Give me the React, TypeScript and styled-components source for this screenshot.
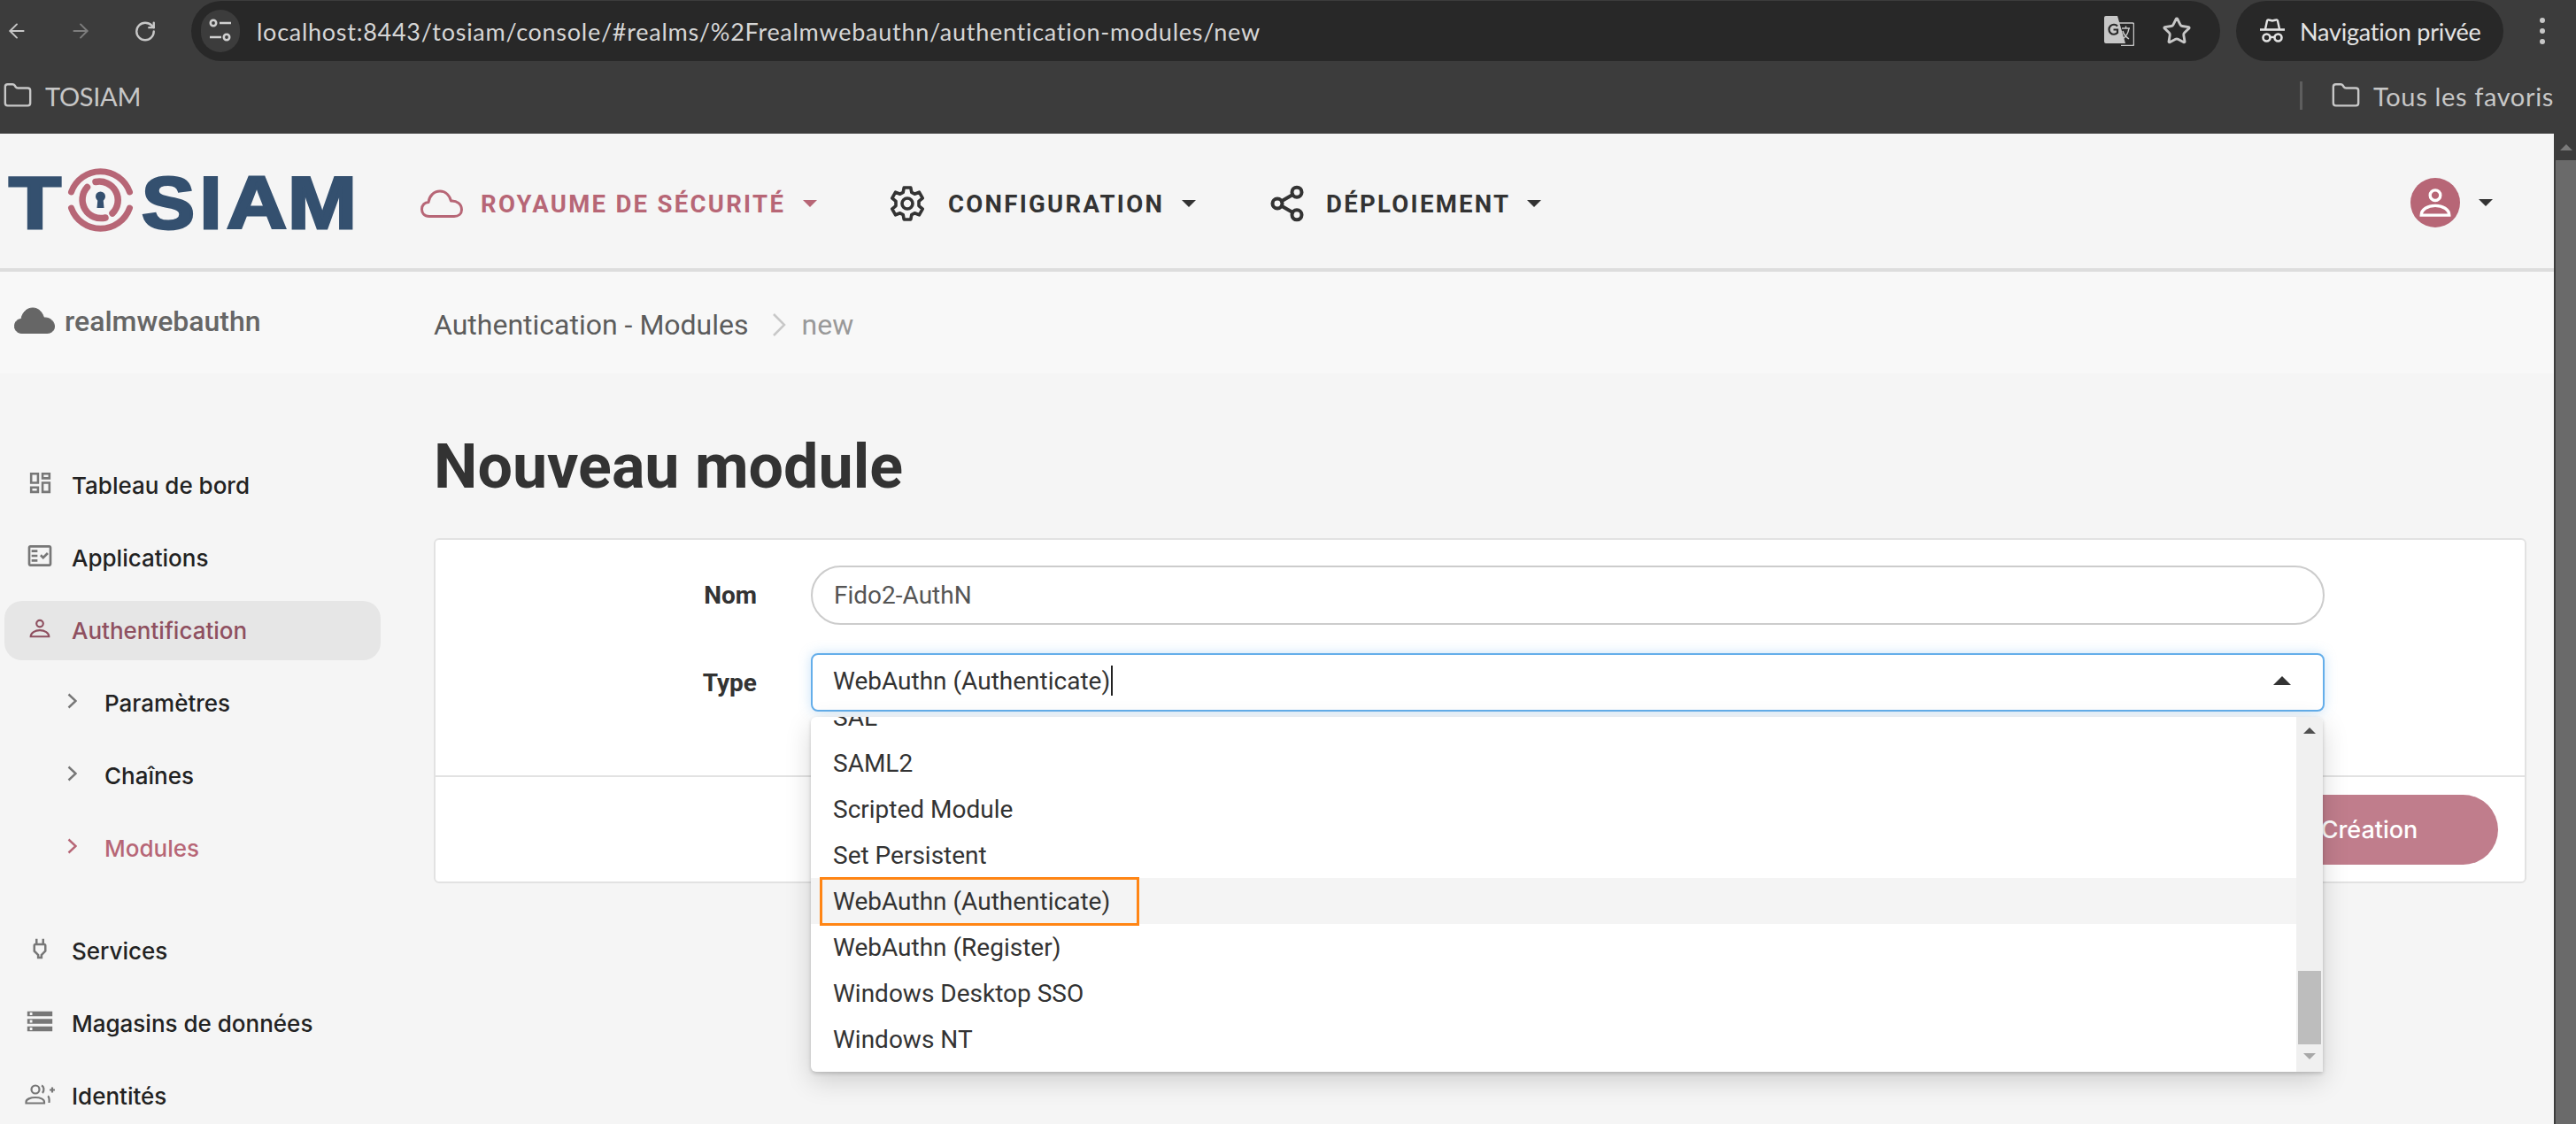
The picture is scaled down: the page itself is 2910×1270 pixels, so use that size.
import React from "react";
import styled, { createGlobalStyle } from "styled-components";
import { ArrowLeft, ArrowRight, RotateCw, Star, Folder, Share2 } from "lucide-react";
import { MdOutlineDashboard, MdOutlineFactCheck, MdOutlinePower, MdStorage } from "react-icons/md";

const rose = "#b76676";
const logoBlue = "#34506f";

const GlobalStyle = createGlobalStyle`
  html, body { margin: 0; padding: 0; background: #f5f5f5; overflow: hidden; }
  * { box-sizing: border-box; }
`;

const Screen = styled.div`
  width: 2910px;
  height: 1270px;
  overflow: hidden;
  display: flex;
  flex-direction: column;
  font-family: Roboto, "Liberation Sans", sans-serif;
`;

/* browser chrome */
const Chrome = styled.div`
  height: 151px;
  flex: none;
  background: #3c3c3c;
  color: #c7c7c7;
  font-family: Lato, "Noto Sans", sans-serif;
  font-size: 27px;
`;

const AddressRow = styled.div`
  height: 70px;
  display: flex;
  align-items: center;
  padding-left: 6px;
  color: #c7c7c7;
`;

const ToolSlot = styled.div<{ $gap: number; $dim?: boolean }>`
  width: 26px;
  height: 30px;
  margin-right: ${(p) => p.$gap}px;
  color: ${(p) => (p.$dim ? "#7d7d7d" : "#c7c7c7")};
  display: flex;
  align-items: center;
  justify-content: center;
`;

const Omnibox = styled.div`
  width: 2292px;
  height: 68px;
  border-radius: 34px;
  background: #282828;
  display: flex;
  align-items: center;
  padding: 0 32px 0 11px;
`;

const SiteChip = styled.div`
  width: 44px;
  height: 48px;
  border-radius: 24px;
  background: #3c3c3c;
  display: flex;
  align-items: center;
  justify-content: center;
  margin-right: 19px;
`;

const UrlText = styled.span`
  flex: 1;
  color: #d6d6d6;
  font-weight: 400;
  letter-spacing: 0.73px;
  white-space: nowrap;
`;

const OmniIcons = styled.div`
  display: flex;
  align-items: center;
  gap: 31px;
`;

const PrivatePill = styled.div`
  width: 302px;
  height: 68px;
  margin-left: 18px;
  border-radius: 34px;
  background: #282828;
  display: flex;
  align-items: center;
  gap: 16px;
  padding-left: 26px;
  color: #e3e3e3;
  letter-spacing: -0.2px;
  white-space: nowrap;
`;

const MenuDots = styled.div`
  width: 6px;
  margin-left: 41px;
  display: flex;
  flex-direction: column;
  gap: 6px;
  span {
    width: 6px;
    height: 6px;
    border-radius: 50%;
    background: #c7c7c7;
  }
`;

const BookmarkRow = styled.div`
  height: 81px;
  display: flex;
  align-items: center;
  padding: 0 25px 5px 3px;
  font-size: 29px;
  white-space: nowrap;
`;

const Bookmark = styled.div<{ $tracking: number }>`
  display: flex;
  align-items: center;
  gap: 14px;
  letter-spacing: ${(p) => p.$tracking}px;
`;

const BookmarkSeparator = styled.div`
  width: 3px;
  height: 32px;
  background: #5e5e5e;
  margin-left: auto;
  margin-right: 32px;
`;

/* page */
const Viewport = styled.div`
  flex: 1;
  min-height: 0;
  display: flex;
`;

const Page = styled.div`
  width: 2885px;
  flex: none;
  background: #f5f5f5;
  display: flex;
  flex-direction: column;
`;

const PageScroll = styled.div`
  flex: 1;
  background: #3c3c3c;
  padding-left: 2px;
  display: flex;
  flex-direction: column;
  align-items: center;
`;

const PageScrollArrow = styled.div`
  height: 30px;
  display: flex;
  align-items: center;
  justify-content: center;
  &::before {
    content: "";
    border-left: 7px solid transparent;
    border-right: 7px solid transparent;
    border-bottom: 7px solid #7a7a7a;
  }
`;

const PageScrollThumb = styled.div`
  width: 100%;
  flex: 1;
  background: #6a6a6a;
`;

const TopBar = styled.header`
  height: 156px;
  flex: none;
  display: flex;
  align-items: center;
  border-bottom: 4px solid #dddddd;
  padding-right: 69px;
`;

const Logo = styled.svg`
  width: 475px;
  height: 100px;
  flex: none;
`;

const NavItem = styled.div<{ $width: number; $active?: boolean }>`
  width: ${(p) => p.$width}px;
  flex: none;
  margin-top: 6px;
  display: flex;
  align-items: center;
  color: ${(p) => (p.$active ? rose : "#333333")};
`;

const NavLabel = styled.span<{ $iconGap: number }>`
  margin-left: ${(p) => p.$iconGap}px;
  font-size: 27.500px;
  font-weight: 700;
  letter-spacing: 2.300px;
  white-space: nowrap;
`;

const Caret = styled.span<{ $gap: number; $up?: boolean; $size?: number }>`
  width: 0;
  height: 0;
  flex: none;
  margin-left: ${(p) => p.$gap}px;
  border-left: ${(p) => p.$size ?? 8}px solid transparent;
  border-right: ${(p) => p.$size ?? 8}px solid transparent;
  ${(p) => (p.$up ? "border-bottom" : "border-top")}: ${(p) => p.$size ?? 8}px solid currentColor;
`;

const UserMenu = styled.div`
  margin-left: auto;
  margin-top: 3px;
  display: flex;
  align-items: center;
  color: #333333;
`;

const Avatar = styled.div`
  width: 56px;
  height: 56px;
  border-radius: 50%;
  background: ${rose};
  display: flex;
  align-items: center;
  justify-content: center;
`;

const CrumbBar = styled.div`
  height: 115px;
  flex: none;
  background: #f8f8f8;
  display: flex;
  align-items: center;
`;

const Realm = styled.div`
  width: 490px;
  flex: none;
  display: flex;
  align-items: center;
  gap: 10px;
  padding: 0 0 4px 15px;
  color: #666666;
  font-size: 32px;
  font-weight: 500;
`;

const Crumbs = styled.div`
  display: flex;
  align-items: center;
  padding-top: 4px;
  font-size: 32px;
  color: #5c5c5c;
`;

const CrumbChevron = styled.svg`
  width: 16px;
  height: 28px;
  margin: 0 18px 0 26px;
`;

const CrumbCurrent = styled.span`
  color: #999999;
`;

const Body = styled.div`
  flex: 1;
  min-height: 0;
  display: flex;
`;

const Sidebar = styled.nav`
  width: 490px;
  flex: none;
  padding: 93px 0 0 5px;
  font-family: Inter, Roboto, sans-serif;
  font-size: 26px;
  font-weight: 500;
`;

const SideRow = styled.div<{ $sub?: boolean; $active?: boolean; $current?: boolean; $before?: number }>`
  width: 425px;
  height: 67px;
  margin-bottom: 15px;
  margin-top: ${(p) => p.$before ?? 0}px;
  border-radius: 20px;
  display: flex;
  align-items: center;
  padding-left: ${(p) => (p.$sub ? 71 : 20)}px;
  gap: ${(p) => (p.$sub ? 31 : 16)}px;
  background: ${(p) => (p.$active ? "#e6e6e6" : "transparent")};
  color: ${(p) => (p.$active ? "#8f5060" : p.$current ? rose : "#222222")};
  white-space: nowrap;
`;

const SideIcon = styled.span<{ $tint?: string }>`
  width: 40px;
  height: 40px;
  flex: none;
  display: flex;
  align-items: center;
  justify-content: center;
  margin-top: -6px;
  color: ${(p) => p.$tint ?? "#777777"};
`;

const SubChevron = styled.svg`
  width: 11px;
  height: 18px;
  flex: none;
  margin-top: -6px;
`;

const Main = styled.main`
  flex: 1;
  min-width: 0;
  padding: 65px 31px 0 0;
`;

const Title = styled.h1`
  margin: 0 0 41px;
  height: 80px;
  line-height: 80px;
  font-size: 70px;
  font-weight: 700;
  color: #333333;
`;

const Card = styled.section`
  height: 390px;
  background: #ffffff;
  border: 2px solid #e2e2e2;
  border-radius: 6px;
  display: flex;
  flex-direction: column;
`;

const FormArea = styled.div`
  height: 268px;
  flex: none;
  padding-top: 29px;
  border-bottom: 2px solid #e2e2e2;
  display: flex;
  flex-direction: column;
  gap: 32px;
`;

const FormRow = styled.div`
  display: grid;
  grid-template-columns: 363px 1710px;
  column-gap: 61px;
  align-items: center;
`;

const FieldLabel = styled.label`
  text-align: right;
  font-size: 28px;
  font-weight: 700;
  color: #333333;
`;

const NameInput = styled.div`
  height: 67px;
  border: 2px solid #cccccc;
  border-radius: 34px;
  padding-left: 24px;
  display: flex;
  align-items: center;
  font-size: 28px;
  color: #555555;
`;

const SelectWrap = styled.div`
  position: relative;
`;

const SelectBox = styled.div`
  height: 66px;
  border: 2px solid #64aeea;
  border-radius: 8px;
  box-shadow: 0 0 14px rgba(100, 174, 234, 0.35);
  padding: 0 36px 4px 23px;
  display: flex;
  align-items: center;
  font-size: 28px;
  color: #333333;
`;

const TextCursor = styled.span`
  width: 2px;
  height: 34px;
  background: #222222;
  margin-left: 1px;
`;

const SelectSpacer = styled.span`
  flex: 1;
`;

const Dropdown = styled.div`
  position: absolute;
  top: 72px;
  left: 0;
  width: 1708px;
  height: 401px;
  z-index: 5;
  background: #ffffff;
  border-radius: 6px 6px 0 6px;
  box-shadow: 0 2px 4px rgba(0, 0, 0, 0.18), 0 10px 30px rgba(0, 0, 0, 0.16);
  overflow: hidden;
  display: flex;
`;

const OptionList = styled.div`
  flex: 1;
  margin-top: -26px;
`;

const Option = styled.div<{ $hover?: boolean }>`
  height: 52px;
  padding-left: 25px;
  display: flex;
  align-items: center;
  font-size: 28px;
  color: #333333;
  background: ${(p) => (p.$hover ? "#f4f4f4" : "transparent")};
`;

const OptionMark = styled.span`
  position: relative;
  &::after {
    content: "";
    position: absolute;
    left: -15px;
    right: -33px;
    top: -11px;
    bottom: -11px;
    border: 3px solid #ff8514;
  }
`;

const DropScroll = styled.div`
  width: 30px;
  flex: none;
  background: #f0f0f0;
  display: flex;
  flex-direction: column;
  align-items: center;
  padding-top: 12px;
`;

const DropArrow = styled.span<{ $down?: boolean }>`
  width: 0;
  height: 0;
  border-left: 7px solid transparent;
  border-right: 7px solid transparent;
  ${(p) => (p.$down ? "border-top: 7px solid #a8a8a8; margin-top: 10px;" : "border-bottom: 7px solid #505050;")}
`;

const DropThumb = styled.div`
  width: 26px;
  height: 83px;
  margin-top: 268px;
  background: #bdbdbd;
`;

const CardFooter = styled.div`
  flex: 1;
  display: flex;
  align-items: center;
  justify-content: flex-end;
  padding-right: 30px;
`;

const SubmitButton = styled.button`
  width: 291px;
  height: 79px;
  border: none;
  border-radius: 40px;
  background: #c07d8c;
  color: #ffffff;
  font-family: Inter, Roboto, sans-serif;
  font-size: 27px;
  font-weight: 500;
`;

const PeakCloud = ({ filled, w, h }: { filled?: boolean; w: number; h: number }) => (
  <svg width={w} height={h} viewBox="0 0 48 32" style={{ flex: "none" }}>
    <path
      d="M10 30 C4 30 1.500 26 1.500 22 C1.500 17 5 14 9 14 C10 7 15 1.500 22 1.500 C29 1.500 33 7 34.500 12.500 C41 12 46.500 16 46.500 22.500 C46.500 27 43 30 38 30 Z"
      fill={filled ? "currentColor" : "none"}
      stroke="currentColor"
      strokeWidth={filled ? 1 : 3}
      strokeLinejoin="round"
    />
  </svg>
);

const GearIcon = () => (
  <svg width="40" height="40" viewBox="2 2 20 20" fill="none" stroke="currentColor" strokeWidth="1.800" strokeLinejoin="round" style={{ flex: "none" }}>
    <path d="M10.100 3h3.800l.5 2.700 1.700.9 2.600-1 1.900 3.300-2.100 1.800v2.600l2.100 1.800-1.900 3.300-2.600-1-1.700.9-.5 2.700h-3.800l-.5-2.700-1.700-.9-2.600 1-1.900-3.300 2.100-1.800v-2.600L3.400 8.900l1.900-3.300 2.600 1 1.700-.9z" />
    <circle cx="12" cy="12" r="3" />
  </svg>
);

const FolderIcon = () => <Folder size={34} strokeWidth={1.7} />;

const TuneIcon = () => (
  <svg width="26" height="28" viewBox="0 0 26 28" fill="none" stroke="#d0d0d0" strokeWidth="2.600">
    <circle cx="5" cy="5" r="3.200" />
    <path d="M12 5h13M1 21h13" />
    <circle cx="20" cy="21" r="3.200" />
  </svg>
);

const TranslateIcon = () => (
  <svg width="34" height="34" viewBox="0 0 34 34">
    <path d="M15 8h17a1.500 1.500 0 0 1 1.500 1.500V32a1.500 1.500 0 0 1-1.500 1.500H19" fill="none" stroke="#c7c7c7" strokeWidth="1.500" />
    <path d="M2 0h13l9 31H2a2 2 0 0 1-2-2V2a2 2 0 0 1 2-2z" fill="#c7c7c7" />
    <path d="M15 11.500a5.500 5.500 0 1 0 0 7.500v-3.500h-4.500" fill="none" stroke="#282828" strokeWidth="2.200" />
    <path d="M20 14h9M24.500 11.500V14M28 14c-1 6-4 10-7 12M21 17c1 4 4 7 7 9" fill="none" stroke="#c7c7c7" strokeWidth="1.500" />
  </svg>
);

const IncognitoIcon = () => (
  <svg width="30" height="28" viewBox="0 0 30 28" fill="none" stroke="#e3e3e3">
    <path d="M1 12.500h28" strokeWidth="2.600" />
    <path d="M7 12l2-9.500c.3-1 1-1.300 2-1l4 1 4-1c1-.3 1.700 0 2 1l2 9.500" strokeWidth="2.400" />
    <circle cx="8.500" cy="21.500" r="4" strokeWidth="2.600" />
    <circle cx="21.500" cy="21.500" r="4" strokeWidth="2.600" />
    <path d="M12.500 21h5" strokeWidth="2.400" />
  </svg>
);

const PersonIcon = ({ color, size }: { color: string; size: number }) => (
  <svg width={size} height={size} viewBox="0 0 24 24" fill="none" stroke={color} strokeWidth="2">
    <circle cx="12" cy="7" r="3.500" />
    <path d="M2.500 20.500c0-4 4.500-6.500 9.500-6.500s9.500 2.500 9.500 6.500z" />
  </svg>
);

const AddUserIcon = () => (
  <svg width="34" height="24" viewBox="0 0 34 24" fill="none" stroke="#777777" strokeWidth="2.200">
    <circle cx="12" cy="7" r="4.500" />
    <path d="M1.500 22.500v-1.500c0-3 5-5 10.500-5s10 2 10 5v1.500z" />
    <path d="M19 2.500c2.500 1 3.500 5 1 8.500M26 14.500c1.500.8 1.800 4 1.500 7.500M28 7.500h6M31 4.500v6" />
  </svg>
);

const ChevronSmall = ({ color }: { color: string }) => (
  <SubChevron viewBox="0 0 11 18" fill="none" stroke={color} strokeWidth="2.400">
    <path d="M1.500 1.500l8 7.500-8 7.500" />
  </SubChevron>
);

const options = ["SAL", "SAML2", "Scripted Module", "Set Persistent", "WebAuthn (Authenticate)", "WebAuthn (Register)", "Windows Desktop SSO", "Windows NT"];

function App() {
  return (
    <>
      <GlobalStyle />
      <Screen>
        <Chrome>
          <AddressRow>
            <ToolSlot $gap={46}><ArrowLeft size={36} strokeWidth={1.8} /></ToolSlot>
            <ToolSlot $gap={47} $dim><ArrowRight size={36} strokeWidth={1.8} /></ToolSlot>
            <ToolSlot $gap={39}><RotateCw size={31} strokeWidth={2.2} /></ToolSlot>
            <Omnibox>
              <SiteChip><TuneIcon /></SiteChip>
              <UrlText>localhost:8443/tosiam/console/#realms/%2Frealmwebauthn/authentication-modules/new</UrlText>
              <OmniIcons>
                <TranslateIcon />
                <Star size={34} strokeWidth={2} color="#c7c7c7" />
              </OmniIcons>
            </Omnibox>
            <PrivatePill>
              <IncognitoIcon />
              <span>Navigation privée</span>
            </PrivatePill>
            <MenuDots><span /><span /><span /></MenuDots>
          </AddressRow>
          <BookmarkRow>
            <Bookmark $tracking={-0.3}><FolderIcon />TOSIAM</Bookmark>
            <BookmarkSeparator />
            <Bookmark $tracking={0.65}><FolderIcon />Tous les favoris</Bookmark>
          </BookmarkRow>
        </Chrome>
        <Viewport>
          <Page>
            <TopBar>
              <Logo viewBox="0 177 475 100">
                <g fill={logoBlue} stroke={logoBlue} strokeWidth="3" fontFamily="'Liberation Sans', sans-serif" fontWeight="700" fontSize="84">
                  <text x="10" y="257.500" textLength="59" lengthAdjust="spacingAndGlyphs">T</text>
                  <text x="160" y="257.500" textLength="60" lengthAdjust="spacingAndGlyphs">S</text>
                  <text x="225.500" y="257.500" textLength="25" lengthAdjust="spacingAndGlyphs">I</text>
                  <text x="256" y="257.500" textLength="68" lengthAdjust="spacingAndGlyphs">A</text>
                  <text x="325" y="257.500" textLength="78" lengthAdjust="spacingAndGlyphs">M</text>
                </g>
                <g fill="none" stroke={rose} strokeLinecap="round">
                  <path d="M80.500 217A35 35 0 0 1 146.500 217" strokeWidth="7" />
                  <path d="M80.500 235A35 35 0 0 0 146.500 235" strokeWidth="7" />
                  <path d="M108 205.500A21 21 0 0 1 127 241" strokeWidth="7.500" />
                  <path d="M119 246A21 21 0 0 1 98.500 211.500" strokeWidth="7.500" />
                </g>
                <circle cx="113.500" cy="222" r="5.500" fill={logoBlue} />
                <path d="M110.500 224L109.500 235H117.500L116.500 224Z" fill={logoBlue} />
              </Logo>
              <NavItem $width={530} $active>
                <PeakCloud w={48} h={33} />
                <NavLabel $iconGap={20}>ROYAUME DE SÉCURITÉ</NavLabel>
                <Caret $gap={20} />
              </NavItem>
              <NavItem $width={430}>
                <GearIcon />
                <NavLabel $iconGap={26}>CONFIGURATION</NavLabel>
                <Caret $gap={20} />
              </NavItem>
              <NavItem $width={320}>
                <Share2 size={44} strokeWidth={2.2} style={{ margin: "0 -3px" }} />
                <NavLabel $iconGap={25}>DÉPLOIEMENT</NavLabel>
                <Caret $gap={19} />
              </NavItem>
              <UserMenu>
                <Avatar><PersonIcon color="#ffffff" size={40} /></Avatar>
                <Caret $gap={21} />
              </UserMenu>
            </TopBar>
            <CrumbBar>
              <Realm>
                <PeakCloud filled w={48} h={33} />
                realmwebauthn
              </Realm>
              <Crumbs>
                Authentication - Modules
                <CrumbChevron viewBox="0 0 16 28" fill="none" stroke="#c8c8c8" strokeWidth="2.500">
                  <path d="M2 2l12 12-12 12" />
                </CrumbChevron>
                <CrumbCurrent>new</CrumbCurrent>
              </Crumbs>
            </CrumbBar>
            <Body>
              <Sidebar>
                <SideRow>
                  <SideIcon><MdOutlineDashboard size={31} /></SideIcon>
                  Tableau de bord
                </SideRow>
                <SideRow>
                  <SideIcon><MdOutlineFactCheck size={32} /></SideIcon>
                  Applications
                </SideRow>
                <SideRow $active>
                  <SideIcon><PersonIcon color="#8f5060" size={26} /></SideIcon>
                  Authentification
                </SideRow>
                <SideRow $sub><ChevronSmall color="#777777" />Paramètres</SideRow>
                <SideRow $sub><ChevronSmall color="#777777" />Chaînes</SideRow>
                <SideRow $sub $current><ChevronSmall color={rose} />Modules</SideRow>
                <SideRow $before={49}>
                  <SideIcon><MdOutlinePower size={30} /></SideIcon>
                  Services
                </SideRow>
                <SideRow>
                  <SideIcon><MdStorage size={34} /></SideIcon>
                  Magasins de données
                </SideRow>
                <SideRow>
                  <SideIcon><AddUserIcon /></SideIcon>
                  Identités
                </SideRow>
              </Sidebar>
              <Main>
                <Title>Nouveau module</Title>
                <Card>
                  <FormArea>
                    <FormRow>
                      <FieldLabel>Nom</FieldLabel>
                      <NameInput>Fido2-AuthN</NameInput>
                    </FormRow>
                    <FormRow>
                      <FieldLabel>Type</FieldLabel>
                      <SelectWrap>
                        <SelectBox>
                          WebAuthn (Authenticate)<TextCursor />
                          <SelectSpacer />
                          <Caret $gap={0} $up $size={10} />
                        </SelectBox>
                        <Dropdown>
                          <OptionList>
                            {options.map((o) =>
                              o === "WebAuthn (Authenticate)" ? (
                                <Option key={o} $hover><OptionMark>{o}</OptionMark></Option>
                              ) : (
                                <Option key={o}>{o}</Option>
                              ),
                            )}
                          </OptionList>
                          <DropScroll>
                            <DropArrow />
                            <DropThumb />
                            <DropArrow $down />
                          </DropScroll>
                        </Dropdown>
                      </SelectWrap>
                    </FormRow>
                  </FormArea>
                  <CardFooter>
                    <SubmitButton>Création</SubmitButton>
                  </CardFooter>
                </Card>
              </Main>
            </Body>
          </Page>
          <PageScroll>
            <PageScrollArrow />
            <PageScrollThumb />
          </PageScroll>
        </Viewport>
      </Screen>
    </>
  );
}

export default App;
